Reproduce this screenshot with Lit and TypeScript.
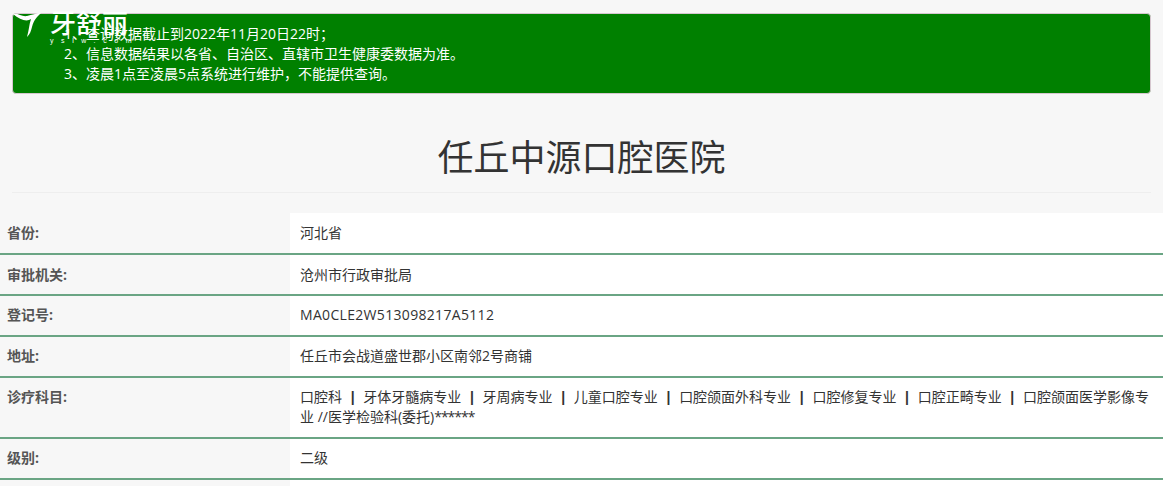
import { LitElement, html, css } from "lit";
import { customElement } from "lit/decorators.js";

const specialties = ["口腔科", "牙体牙髓病专业", "牙周病专业", "儿童口腔专业", "口腔颌面外科专业", "口腔修复专业", "口腔正畸专业", "口腔颌面医学影像专业"];

@customElement("app-root")
export class AppRoot extends LitElement {
  static styles = css`
    :host {
      display: block;
      position: relative;
      height: 486px;
      overflow: hidden;
      background: #f7f7f7;
      color: #333;
      font-family: "Open Sans", "Noto Sans CJK SC", sans-serif;
      font-size: 14px;
      line-height: 20px;
    }
    .logo {
      position: absolute;
      left: 4px;
      top: 4px;
      display: flex;
      color: #fff;
      z-index: 2;
    }
    .tooth { width: 42px; height: 36px; }
    .brand { display: flex; flex-direction: column; align-items: flex-start; margin-left: 4px; padding-top: 5px; }
    .brand-cn {
      font-family: "Noto Sans CJK SC", sans-serif;
      font-size: 26px;
      line-height: 26px;
      font-weight: 500;
    }
    .brand-en {
      font-family: "Liberation Sans", sans-serif;
      font-size: 7px;
      line-height: 8px;
      letter-spacing: 7.6px;
      margin-top: 2px;
      white-space: nowrap;
    }
    .wrap { padding: 13px 12px 0; }
    .alert {
      background: #008000;
      color: #fff;
      border: 1px solid #d6c7cf;
      border-radius: 4px;
      padding: 10px 20px 9px 51px;
    }
    .title-box {
      border-bottom: 1px solid #eee;
      height: 99px;
      box-sizing: border-box;
      display: flex;
      align-items: center;
      justify-content: center;
      padding-top: 23px;
    }
    h1 {
      margin: 0;
      font-size: 36px;
      line-height: 40px;
      font-weight: 400;
      color: #333;
      font-family: "Noto Sans CJK SC", sans-serif;
    }
    .table { margin-top: 20px; }
    .row {
      display: grid;
      grid-template-columns: 290px 1fr;
      border-bottom: 2px solid #6aa584;
    }
    .label {
      padding: 9px 7px 10px;
      font-weight: 700;
      color: #555;
    }
    .value {
      padding: 9px 10px 10px;
      background: #fff;
    }
    .row:first-child .value, .row:first-child .label { padding-top: 10px; }
    .row:nth-child(2) .value, .row:nth-child(2) .label { padding-top: 10px; padding-bottom: 9px; }
    .row.end { border-bottom: none; height: 60px; }
    .code { letter-spacing: 0.32px; }
    .sep {
      display: inline-block;
      width: 14px;
      text-align: center;
      font-family: "Liberation Sans", sans-serif;
      font-weight: 700;
      color: #333;
    }
    .stars { letter-spacing: -1px; }
  `;

  private row(label: string, value: unknown) {
    return html`<div class="row"><div class="label">${label}</div><div class="value">${value}</div></div>`;
  }

  render() {
    return html`
      <div class="logo">
        <svg class="tooth" viewBox="4 4 42 36" fill="#fff">
          <path d="M13 14C18 13 22 17 27 16C32 15 36 13 41 13C36 18 34 20 32 27C31 31 30 34 27 37C29 30 29 25 31 19C27 22 20 20 13 14Z"/>
        </svg>
        <div class="brand">
          <div class="brand-cn">牙舒丽</div>
          <div class="brand-en">yslw.com</div>
        </div>
      </div>
      <div class="wrap">
        <div class="alert">
          <div>1、查询数据截止到2022年11月20日22时；</div>
          <div>2、信息数据结果以各省、自治区、直辖市卫生健康委数据为准。</div>
          <div>3、凌晨1点至凌晨5点系统进行维护，不能提供查询。</div>
        </div>
        <div class="title-box"><h1>任丘中源口腔医院</h1></div>
      </div>
      <div class="table">
        ${this.row("省份:", "河北省")}
        ${this.row("审批机关:", "沧州市行政审批局")}
        ${this.row("登记号:", html`<span class="code">MA0CLE2W513098217A5112</span>`)}
        ${this.row("地址:", "任丘市会战道盛世郡小区南邻2号商铺")}
        ${this.row("诊疗科目:", html`${specialties.map((s, i) => html`${i ? html` <span class="sep">|</span> ` : ""}${s}`)} //医学检验科(委托)<span class="stars">******</span>`)}
        ${this.row("级别:", "二级")}
        <div class="row end"><div class="label"></div><div class="value"></div></div>
      </div>
    `;
  }
}
